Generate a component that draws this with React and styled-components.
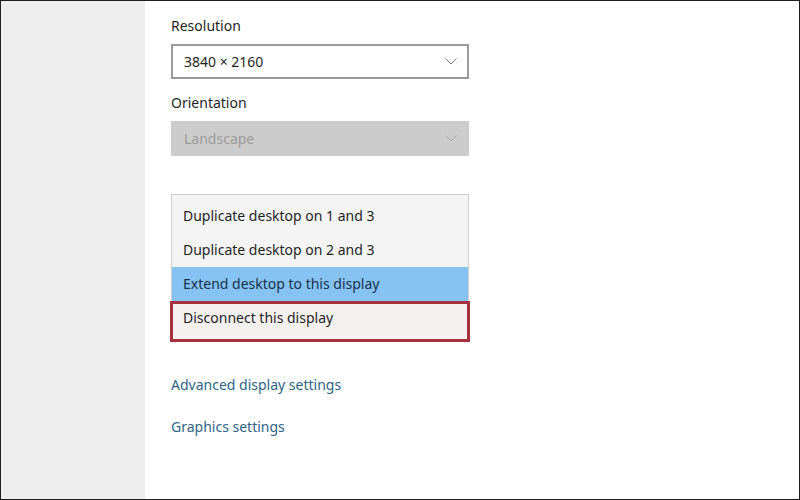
import React from "react";
import styled, { createGlobalStyle } from "styled-components";

const GlobalStyle = createGlobalStyle`
  body {
    margin: 0;
    font-family: "Noto Sans", "Open Sans", sans-serif;
  }
`;

const Frame = styled.div`
  width: 800px;
  height: 500px;
  box-sizing: border-box;
  border: 1px solid #1e1e1e;
  display: grid;
  grid-template-columns: 144px 1fr;
  overflow: hidden;
`;

const Sidebar = styled.div`
  background: #eeeeee;
`;

const Main = styled.div`
  background: #ffffff;
  padding: 15px 0 0 26px;
  display: flex;
  flex-direction: column;
  color: #1f1f1f;
`;

const Label = styled.div`
  font-size: 14px;
  line-height: 20px;
  margin-bottom: 8px;
`;

const Select = styled.div`
  width: 298px;
  height: 35px;
  box-sizing: border-box;
  border: 2px solid ${(p) => (p.disabled ? "#cccccc" : "#9a9a9a")};
  background: ${(p) => (p.disabled ? "#cccccc" : "#ffffff")};
  color: ${(p) => (p.disabled ? "#9b9b9b" : "#1f1f1f")};
  display: flex;
  align-items: center;
  justify-content: space-between;
  padding: 0 10px 1px 11px;
  font-size: 14px;
  margin-bottom: ${(p) => p.gap || 0}px;
`;

const Chevron = ({ color }) => (
  <svg width="12" height="7" viewBox="0 0 12 7">
    <path d="M0.5 0.5 L6 6 L11.5 0.5" fill="none" stroke={color} strokeWidth="1" />
  </svg>
);

const List = styled.div`
  width: 298px;
  box-sizing: border-box;
  border: 1px solid #cfcfcf;
  border-bottom: none;
  padding-top: 4px;
  background: #f4f4f4;
  margin-top: 38px;
`;

const Item = styled.div`
  height: 34px;
  box-sizing: border-box;
  display: flex;
  align-items: center;
  padding: 0 11px 1px;
  font-size: 14px;
  background: ${(p) => (p.active ? "#86c3f3" : "transparent")};
  color: ${(p) => (p.active ? "#17324d" : "#1f1f1f")};
`;

const Marked = styled(Item)`
  height: 41px;
  margin: 0 -2px;
  border: 3px solid #a8303d;
  background: #f6f1f1;
  padding: 0 10px 8px 10px;
`;

const Link = styled.a`
  font-size: 14px;
  color: #2f6485;
  text-decoration: none;
  line-height: 20px;
  margin-top: ${(p) => p.top}px;
`;

export default function App() {
  return (
    <>
      <GlobalStyle />
      <Frame>
        <Sidebar />
        <Main>
          <Label>Resolution</Label>
          <Select gap={14}>
            <span>3840 × 2160</span>
            <Chevron color="#7a7a7a" />
          </Select>
          <Label>Orientation</Label>
          <Select disabled>
            <span>Landscape</span>
            <Chevron color="#a8a8a8" />
          </Select>
          <List>
            <Item>Duplicate desktop on 1 and 3</Item>
            <Item>Duplicate desktop on 2 and 3</Item>
            <Item active>Extend desktop to this display</Item>
            <Marked>Disconnect this display</Marked>
          </List>
          <Link href="#" top={33}>Advanced display settings</Link>
          <Link href="#" top={22}>Graphics settings</Link>
        </Main>
      </Frame>
    </>
  );
}
